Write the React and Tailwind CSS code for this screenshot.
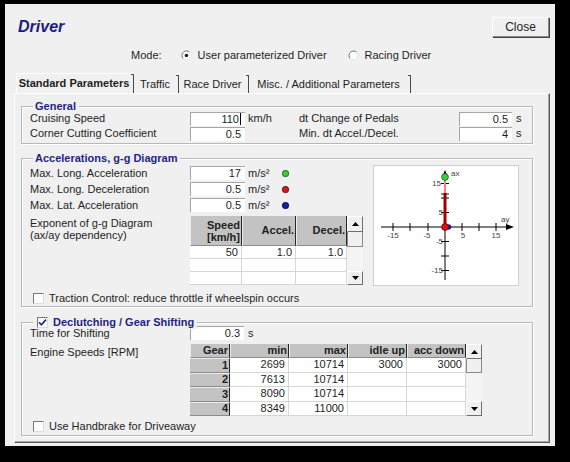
import React from "react";

function Radio({ checked, className = "" }) {
  return (
    <svg width="11" height="11" viewBox="0 0 11 11" className={`shrink-0 ${className}`}>
      <circle cx="5.5" cy="5.5" r="4.5" fill="#fff" />
      <path d="M8.7 2.3 A4.5 4.5 0 0 0 2.3 8.7" stroke="#6f6f6f" strokeWidth="1" fill="none" />
      <path d="M8.7 2.3 A4.5 4.5 0 0 1 2.3 8.7" stroke="#e2e2e2" strokeWidth="1" fill="none" />
      {checked && <circle cx="5.5" cy="5.5" r="1.8" fill="#222" />}
    </svg>
  );
}

function Check({ checked }) {
  return (
    <span className="w-[11px] h-[11px] bg-white border border-t-[#777] border-l-[#777] border-r-[#dcdcdc] border-b-[#dcdcdc] flex items-center justify-center shrink-0">
      {checked && (
        <svg width="9" height="9" viewBox="0 0 9 9">
          <path d="M1 4.2 L3.4 6.8 L8 1.6" stroke="#22228a" strokeWidth="1.6" fill="none" />
        </svg>
      )}
    </span>
  );
}

function Field({ value, w, cursor }) {
  return (
    <div className={`${w} h-[14px] bg-white border-t border-l border-[#a6a6a6] flex items-center justify-end pr-[4px] shrink-0`}>
      <span>{value}</span>
      {cursor && <span className="w-[1px] h-[12px] bg-black ml-[1px]" />}
    </div>
  );
}

function Dot({ color }) {
  return <span className={`w-[5px] h-[5px] rounded-full ${color} shrink-0`} />;
}

function Group({ title, h, mt, check, children }) {
  return (
    <div className={`relative w-[512px] ${h} ${mt} border border-[#b8b8b8] shadow-[inset_1px_1px_0_#ffffff,1px_1px_0_#ffffff]`}>
      <div className={`absolute top-[-7px] left-[11px] ${check ? "pl-[4px]" : "pl-[2px]"} pr-[3px] h-[13px] bg-[#f0f0f0] flex items-center gap-[5px] font-bold text-[#1f1f86]`}>
        {check && <Check checked />}
        <span>{title}</span>
      </div>
      {children}
    </div>
  );
}

function ScrollBar({ h, up, thumb, down }) {
  return (
    <div className={`w-[16px] ${h} flex flex-col bg-[#f4f4f4]`}>
      <div className={`${up} flex items-center justify-center bg-[#f0f0f0] border border-t-white border-l-white border-r-[#707070] border-b-[#707070]`}>
        <svg width="7" height="4" viewBox="0 0 7 4"><path d="M0 4 L3.5 0 L7 4 Z" fill="#000" /></svg>
      </div>
      <div className={`${thumb} border border-[#8a8a8a] border-t-0 bg-[#f0f0f0]`} />
      <div className="flex-1" />
      <div className={`${down} flex items-center justify-center bg-[#f0f0f0] border border-t-white border-l-white border-r-[#707070] border-b-[#707070]`}>
        <svg width="7" height="4" viewBox="0 0 7 4"><path d="M0 0 L3.5 4 L7 0 Z" fill="#000" /></svg>
      </div>
    </div>
  );
}

const headCell =
  "bg-[#c3c3c3] border-l border-l-[#ececec] border-r border-r-[#262626] border-b border-b-[#8c8c8c] font-bold flex items-center justify-end text-right pr-[1px]";
const dataCell = "bg-white border-r border-b border-[#d6d6d6] flex items-center justify-end pr-[3px]";

function AccelTable() {
  const rows = [["50", "1.0", "1.0"], ["", "", ""], ["", "", ""]];
  return (
    <div className="flex">
      <div className="flex flex-col w-[157px]">
        <div className="flex h-[30px]">
          <div className={`${headCell} w-[52px] leading-[12px]`}>Speed<br />[km/h]</div>
          <div className={`${headCell} w-[54px]`}>Accel.</div>
          <div className={`${headCell} w-[51px]`}>Decel.</div>
        </div>
        {rows.map((r, i) => (
          <div key={i} className="flex h-[13px]">
            <div className={`${dataCell} w-[52px]`}>{r[0]}</div>
            <div className={`${dataCell} w-[54px]`}>{r[1]}</div>
            <div className={`${dataCell} w-[51px]`}>{r[2]}</div>
          </div>
        ))}
      </div>
      <ScrollBar h="h-[69px]" up="h-[16px]" thumb="h-[15px]" down="h-[14px]" />
    </div>
  );
}

function GearTable() {
  const rows = [
    ["1", "2699", "10714", "3000", "3000"],
    ["2", "7613", "10714", "", ""],
    ["3", "8090", "10714", "", ""],
    ["4", "8349", "11000", "", ""],
  ];
  const heads = ["min", "max", "idle up", "acc down"];
  return (
    <div className="flex">
      <div className="flex flex-col w-[276px]">
        <div className="flex h-[14px]">
          <div className={`${headCell} w-[40px]`}>Gear</div>
          {heads.map((t) => (
            <div key={t} className={`${headCell} w-[59px]`}>{t}</div>
          ))}
        </div>
        {rows.map((r) => (
          <div key={r[0]} className="flex h-[14.5px]">
            <div className="w-[40px] bg-[#c3c3c3] border-t border-t-[#ececec] border-r border-r-[#262626] border-b border-b-[#8c8c8c] font-bold flex items-center justify-end pr-[1px]">{r[0]}</div>
            {r.slice(1).map((v, j) => (
              <div key={j} className={`${dataCell} w-[59px]`}>{v}</div>
            ))}
          </div>
        ))}
      </div>
      <ScrollBar h="h-[72px]" up="h-[15px]" thumb="h-[14px]" down="h-[15px]" />
    </div>
  );
}

function GGChart() {
  const hx = [19, 36, 54, 88, 105, 122];
  const vy = [17.5, 32, 46.5, 75.5, 90, 104.5];
  return (
    <div className="w-[146px] h-[121px] bg-white border border-[#cfcfcf] ml-[10px] shrink-0">
      <svg width="144" height="119" viewBox="0 0 144 119" fontFamily="Liberation Sans, Arial, sans-serif">
        <line x1="7" y1="61" x2="136" y2="61" stroke="#000" />
        <path d="M132 58 L140 61 L132 64 Z" fill="#000" />
        <line x1="71" y1="8" x2="71" y2="114" stroke="#000" />
        <path d="M68 11 L71 4 L74 11 Z" fill="#000" />
        {hx.map((x) => (
          <line key={x} x1={x} y1="57" x2={x} y2="65" stroke="#000" />
        ))}
        {vy.map((y) => (
          <line key={y} x1="67" y1={y} x2="75" y2={y} stroke="#000" />
        ))}
        <g fontSize="8" fill="#444">
          <text x="19" y="72" textAnchor="middle">-15</text>
          <text x="53" y="72" textAnchor="middle">-5</text>
          <text x="89" y="72" textAnchor="middle">5</text>
          <text x="122" y="72" textAnchor="middle">15</text>
          <text x="67" y="20" textAnchor="end">15</text>
          <text x="69" y="49" textAnchor="end">5</text>
          <text x="69" y="78" textAnchor="end">-5</text>
          <text x="69" y="107" textAnchor="end">-15</text>
          <text x="77" y="10">ax</text>
          <text x="127" y="56">ay</text>
        </g>
        <line x1="71" y1="61" x2="71" y2="12" stroke="#ff7a7a" strokeWidth="2" />
        <line x1="71" y1="27" x2="71" y2="61" stroke="#a00000" strokeWidth="3" />
        <line x1="67" y1="28" x2="75" y2="28" stroke="#600000" />
        <circle cx="74.5" cy="61" r="2.8" fill="#1b1b9a" />
        <circle cx="71" cy="61" r="3.4" fill="#e01010" stroke="#700000" strokeWidth="0.8" />
        <circle cx="71" cy="11" r="3.4" fill="#3ccc3c" stroke="#146614" strokeWidth="0.8" />
      </svg>
    </div>
  );
}

function Tab({ w, active, children }) {
  return (
    <div className={`${w} flex ${active ? "h-[20px] border-t border-l border-white font-bold" : "h-[18px] mt-[2px]"}`}>
      <div className="flex-1 flex items-center justify-center">{children}</div>
      <span className="w-[3px] border-t border-r border-[#4a4a4a]" />
    </div>
  );
}

export default function App() {
  return (
    <div className="w-[570px] h-[462px] bg-black pt-[4px] pl-[5px] font-['Liberation_Sans',Arial,sans-serif] text-[11px] text-[#1e1e1e] leading-none">
      <div className="w-[550px] h-[442px] bg-[#f0f0f0] flex flex-col">
        {/* title bar */}
        <div className="flex items-center justify-between h-[20px] mt-[13px] pl-[13px] pr-[6px]">
          <span className="text-[16px] font-bold italic text-[#1b1b86]">Driver</span>
          <div className="w-[57px] h-[20px] flex items-center justify-center text-[12px] bg-[#f0f0f0] border border-t-white border-l-white border-r-[#8a8a8a] border-b-[#8a8a8a] shadow-[1px_1px_0_#444]">
            Close
          </div>
        </div>

        {/* mode */}
        <div className="flex items-center h-[14px] mt-[11px] pl-[126px]">
          <span>Mode:</span>
          <Radio checked className="ml-[19px]" />
          <span className="ml-[6px]">User parameterized Driver</span>
          <Radio className="ml-[21px]" />
          <span className="ml-[6px]">Racing Driver</span>
        </div>

        {/* tabs */}
        <div className="flex h-[20px] mt-[11px] pl-[11px]">
          <Tab w="w-[118px]" active>Standard Parameters</Tab>
          <Tab w="w-[45px]">Traffic</Tab>
          <Tab w="w-[70px]">Race Driver</Tab>
          <Tab w="w-[162px]">Misc. / Additional Parameters</Tab>
        </div>

        {/* panel */}
        <div className="ml-[9px] w-[536px] h-[350px] border border-t-white border-l-white border-r-[#5a5a5a] border-b-[#5a5a5a] shadow-[inset_-1px_-1px_0_#a8a8a8] pt-[12px] pl-[6px] flex flex-col">
          <Group title="General" h="h-[38px]" mt="mt-0">
            <div className="flex flex-col pt-[4px] pl-[8px]">
              <div className="flex items-center h-[15px]">
                <div className="flex items-center w-[269px]">
                  <span className="w-[160px]">Cruising Speed</span>
                  <Field value="110" w="w-[55px]" cursor />
                  <span className="ml-[3px]">km/h</span>
                </div>
                <span className="w-[160px]">dt Change of Pedals</span>
                <Field value="0.5" w="w-[53px]" />
                <span className="ml-[4px]">s</span>
              </div>
              <div className="flex items-center h-[15px]">
                <div className="flex items-center w-[269px]">
                  <span className="w-[160px]">Corner Cutting Coefficient</span>
                  <Field value="0.5" w="w-[55px]" />
                </div>
                <span className="w-[160px]">Min. dt Accel./Decel.</span>
                <Field value="4" w="w-[53px]" />
                <span className="ml-[4px]">s</span>
              </div>
            </div>
          </Group>

          <Group title="Accelerations, g-g Diagram" h="h-[149px]" mt="mt-[14px]">
            <div className="flex flex-col pt-[6px] pl-[8px]">
              <div className="flex">
                <div className="flex flex-col w-[333px]">
                  {[
                    ["Max. Long. Acceleration", "17", "bg-[#3ccc3c] ring-1 ring-[#1d7a1d]"],
                    ["Max. Long. Deceleration", "0.5", "bg-[#d81a1a] ring-1 ring-[#7a1010]"],
                    ["Max. Lat. Acceleration", "0.5", "bg-[#1d1da8] ring-1 ring-[#10105a]"],
                  ].map(([l, v, c]) => (
                    <div key={l} className="flex items-center h-[16px]">
                      <span className="w-[160px]">{l}</span>
                      <Field value={v} w="w-[55px]" />
                      <span className="ml-[3px] w-[35px]">m/s²</span>
                      <Dot color={c} />
                    </div>
                  ))}
                  <div className="flex mt-[3px]">
                    <div className="w-[160px] leading-[12px] pt-[1px]">
                      Exponent of g-g Diagram
                      <br />
                      (ax/ay dependency)
                    </div>
                    <AccelTable />
                  </div>
                </div>
                <GGChart />
              </div>
              <div className="flex items-center h-[14px] mt-[5px] pl-[3px] gap-[5px]">
                <Check />
                <span>Traction Control: reduce throttle if wheelspin occurs</span>
              </div>
            </div>
          </Group>

          <Group title="Declutching / Gear Shifting" h="h-[114px]" mt="mt-[15px]" check>
            <div className="flex flex-col pt-[3px] pl-[8px]">
              <div className="flex items-center h-[14px]">
                <span className="w-[160px]">Time for Shifting</span>
                <Field value="0.3" w="w-[54px]" />
                <span className="ml-[4px]">s</span>
              </div>
              <div className="flex mt-[4px]">
                <span className="w-[160px] h-[14px] mt-[1px] flex items-center">Engine Speeds [RPM]</span>
                <GearTable />
              </div>
              <div className="flex items-center h-[14px] mt-[3px] pl-[3px] gap-[5px]">
                <Check />
                <span>Use Handbrake for Driveaway</span>
              </div>
            </div>
          </Group>
        </div>
      </div>
    </div>
  );
}
